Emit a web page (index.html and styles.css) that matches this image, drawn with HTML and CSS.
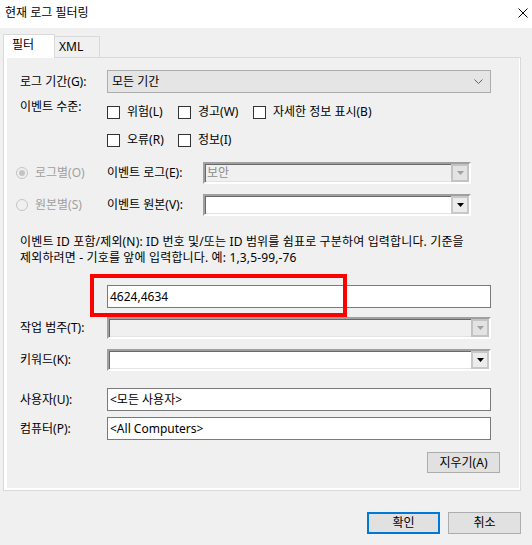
FILE: index.html
```html
<!DOCTYPE html>
<html lang="ko">
<head>
<meta charset="utf-8">
<title>현재 로그 필터링</title>
<link rel="stylesheet" href="styles.css">
</head>
<body>
<div class="window">
  <div class="titlebar">
    <span class="title">현재 로그 필터링</span>
    <svg class="close" width="10" height="10" viewBox="0 0 10 10"><path d="M0.5 0.5L9.5 9.5M9.5 0.5L0.5 9.5" stroke="#000" stroke-width="1" fill="none"/></svg>
  </div>
  <div class="client">
    <div class="tabs">
      <div class="tab active">필터</div>
      <div class="tab xml">XML</div>
    </div>
    <div class="panel">
      <div class="row r-period">
        <span class="label">로그 기간(G):</span>
        <div class="select">
          <span>모든 기간</span>
          <svg class="chev" width="9" height="5" viewBox="0 0 9 5"><path d="M0.5 0.5L4.5 4.5L8.5 0.5" stroke="#606060" stroke-width="1" fill="none"/></svg>
        </div>
      </div>
      <div class="row r-level">
        <span class="label">이벤트 수준:</span>
        <div class="checks">
          <div class="check-line">
            <span class="check c1"><span class="box"></span>위험(L)</span>
            <span class="check c2"><span class="box"></span>경고(W)</span>
            <span class="check"><span class="box"></span>자세한 정보 표시(B)</span>
          </div>
          <div class="check-line">
            <span class="check c1"><span class="box"></span>오류(R)</span>
            <span class="check c2"><span class="box"></span>정보(I)</span>
          </div>
        </div>
      </div>
      <div class="row r-log">
        <span class="radio-opt"><span class="radio checked"></span>로그별(O)</span>
        <span class="sublabel">이벤트 로그(E):</span>
        <div class="combo short disabled">
          <span class="combo-text">보안</span>
          <span class="drop"><svg width="7" height="4" viewBox="0 0 7 4"><path d="M0 0H7L3.5 4Z" fill="#a0a0a0"/></svg></span>
        </div>
      </div>
      <div class="row r-src">
        <span class="radio-opt"><span class="radio"></span>원본별(S)</span>
        <span class="sublabel">이벤트 원본(V):</span>
        <div class="combo short">
          <span class="combo-text"></span>
          <span class="drop"><svg width="7" height="4" viewBox="0 0 7 4"><path d="M0 0H7L3.5 4Z" fill="#000"/></svg></span>
        </div>
      </div>
      <div class="desc">
        <p>이벤트 ID 포함/제외(N): ID 번호 및/또는 ID 범위를 쉼표로 구분하여 입력합니다. 기준을</p>
        <p>제외하려면 - 기호를 앞에 입력합니다. 예: 1,3,5-99,-76</p>
      </div>
      <div class="row r-ids">
        <span class="label"></span>
        <div class="input">4624,4634</div>
      </div>
      <div class="row r-task">
        <span class="label">작업 범주(T):</span>
        <div class="combo wide disabled">
          <span class="combo-text"></span>
          <span class="drop"><svg width="7" height="4" viewBox="0 0 7 4"><path d="M0 0H7L3.5 4Z" fill="#a0a0a0"/></svg></span>
        </div>
      </div>
      <div class="row r-key">
        <span class="label">키워드(K):</span>
        <div class="combo wide">
          <span class="combo-text"></span>
          <span class="drop"><svg width="7" height="4" viewBox="0 0 7 4"><path d="M0 0H7L3.5 4Z" fill="#000"/></svg></span>
        </div>
      </div>
      <div class="row r-user">
        <span class="label">사용자(U):</span>
        <div class="input">&lt;모든 사용자&gt;</div>
      </div>
      <div class="row r-comp">
        <span class="label">컴퓨터(P):</span>
        <div class="input">&lt;All Computers&gt;</div>
      </div>
      <div class="clear-wrap">
        <button class="btn clear">지우기(A)</button>
      </div>
    </div>
    <div class="actions">
      <button class="btn ok">확인</button>
      <button class="btn">취소</button>
    </div>
  </div>
  <div class="highlight"></div>
</div>
</body>
</html>
```
FILE: styles.css
```css
* { box-sizing: border-box; margin: 0; padding: 0; }
html, body { width: 532px; height: 545px; overflow: hidden; }
body {
  background: #f0f0f0;
  font: 12px/16px "Noto Sans", "Noto Sans CJK KR", sans-serif;
  color: #000;
}
.window { position: relative; width: 532px; height: 545px; }

.titlebar {
  height: 28px;
  background: #fff;
  display: flex;
  align-items: center;
  justify-content: space-between;
  padding: 0 4px 2px 5px;
}
.close { display: block; }

.client { padding: 6px 11px 0 3px; }

.tabs { display: flex; align-items: flex-end; height: 23px; }
.tab {
  height: 21px;
  border: 1px solid #d9d9d9;
  border-bottom: none;
  line-height: 20px;
}
.tab.active {
  width: 52px;
  height: 24px;
  margin-bottom: -1px;
  padding-left: 8px;
  background: #fff;
  position: relative;
  z-index: 1;
}
.tab.xml { width: 45px; border-left: none; padding-left: 4px; }

.panel {
  width: 518px;
  height: 434px;
  border: 1px solid #d9d9d9;
  box-shadow: inset 3px 0 #fff, inset -1px 0 #fff, inset 0 -2px #fff;
  padding: 12px 29px 0 16px;
  display: flex;
  flex-direction: column;
}

.row { display: flex; align-items: center; }
.label { width: 87px; flex: none; }

.select {
  flex: 1;
  height: 23px;
  background: #e5e5e5;
  border: 1px solid #adadad;
  display: flex;
  align-items: center;
  justify-content: space-between;
  padding: 0 4px 0 4px;
}
.chev { display: block; margin-right: 3px; }

.r-level { align-items: flex-start; margin-top: 6px; }
.checks { display: flex; flex-direction: column; gap: 12px; padding-top: 5px; }
.check-line { display: flex; }
.check { display: flex; align-items: center; gap: 7px; height: 16px; }
.check.c1 { width: 71px; }
.check.c2 { width: 75px; }
.box { width: 13px; height: 13px; border: 1px solid #333; background: #fff; flex: none; }

.r-log { margin-top: 14px; }
.r-src { margin-top: 10px; }
.radio-opt {
  width: 91px;
  margin-left: -4px;
  display: flex;
  align-items: center;
  gap: 7px;
  color: #a0a0a0;
  flex: none;
}
.radio {
  width: 12px;
  height: 12px;
  border-radius: 50%;
  border: 1px solid #c4c4c4;
  background: #f0f0f0;
  display: flex;
  align-items: center;
  justify-content: center;
  flex: none;
}
.radio.checked::after {
  content: "";
  width: 6px;
  height: 6px;
  border-radius: 50%;
  background: #c4c4c4;
}
.sublabel { width: 96px; flex: none; }

.combo {
  height: 22px;
  display: flex;
  align-items: stretch;
  background: #fff;
  border: 2px solid;
  border-color: #a0a0a0 #fff #fff #a0a0a0;
  box-shadow: inset 1px 1px #696969, inset -1px -1px #e3e3e3;
}
.combo.short { width: 268px; }
.combo.wide { flex: 1; }
.combo.disabled { background: #f0f0f0; color: #8c8c8c; }
.combo-text { flex: 1; padding-left: 2px; line-height: 18px; }
.drop {
  width: 18px;
  flex: none;
  background: #ececec;
  border: 2px solid #c8c8c8;
  display: flex;
  align-items: center;
  justify-content: center;
}
.combo.disabled .drop { background: #e3e3e3; border-color: #c3c3c3; }
.drop svg { display: block; }

.desc { margin-top: 18px; line-height: 16px; white-space: nowrap; letter-spacing: 0.15px; }

.input {
  flex: 1;
  height: 23px;
  background: #fff;
  border: 1px solid #7a7a7a;
  padding-left: 2px;
  line-height: 21px;
  white-space: nowrap;
}
.r-ids { margin-top: 19px; }
.r-task { margin-top: 9px; }
.r-key { margin-top: 10px; }
.r-user { margin-top: 17px; }
.r-comp { margin-top: 6px; }

.clear-wrap { display: flex; justify-content: flex-end; margin-top: 12px; margin-right: -9px; }

.btn {
  font: inherit;
  color: #000;
  width: 73px;
  height: 22px;
  background: #e1e1e1;
  border: 1px solid #adadad;
  line-height: 18px;
  text-align: center;
}
.btn.clear { height: 21px; }
.btn.ok { border: 2px solid #0078d7; }

.actions { display: flex; justify-content: flex-end; gap: 8px; margin-top: 21px; }

.highlight {
  position: absolute;
  left: 90px;
  top: 274px;
  width: 257px;
  height: 43px;
  border: 4px solid #ff0000;
}
```
